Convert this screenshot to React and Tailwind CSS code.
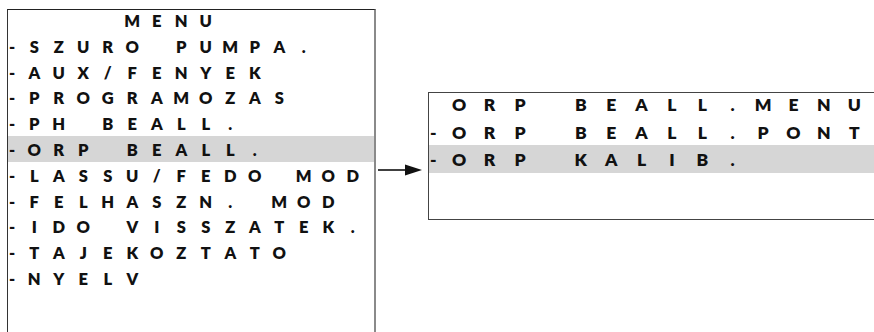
const mainRows = [
  { text: 'SZURO PUMPA.', dash: true },
  { text: 'AUX/FENYEK', dash: true },
  { text: 'PROGRAMOZAS', dash: true },
  { text: 'PH BEALL.', dash: true },
  { text: 'ORP BEALL.', dash: true, active: true },
  { text: 'LASSU/FEDO MOD', dash: true },
  { text: 'FELHASZN. MOD', dash: true },
  { text: 'IDO VISSZATEK.', dash: true },
  { text: 'TAJEKOZTATO', dash: true },
  { text: 'NYELV', dash: true },
];

const orpRows = [
  { text: 'ORP BEALL.PONT', dash: true },
  { text: 'ORP KALIB.', dash: true, active: true },
];

// one character per LCD cell
function Cells({ text, cell }) {
  return (
    <div className="flex">
      {text.split('').map((ch, i) => (
        <span key={i} className={`${cell} text-center`}>
          {ch === ' ' ? '\u00a0' : ch}
        </span>
      ))}
    </div>
  );
}

function MainMenu() {
  return (
    <div className="ml-[7px] mt-[9px] h-[340px] w-[369px] shrink-0 border-l border-t border-l-[#333] border-t-[#222] border-r-2 border-r-[#8a8a8a] text-[16.5px] font-extrabold text-[#111]">
      <div className="flex h-[22.8px] pl-px leading-[22.8px]">
        <span className="w-[13px]" />
        <Cells text="    MENU" cell="w-[24.5px]" />
      </div>
      {mainRows.map((row) => (
        <div
          key={row.text}
          className={`flex h-[25.8px] pl-px pt-[3px] leading-[22.8px] ${row.active ? 'bg-[#d6d6d6]' : ''}`}
        >
          <span className="w-[13px]">-</span>
          <Cells text={row.text} cell="w-[24.5px]" />
        </div>
      ))}
    </div>
  );
}

function OrpMenu() {
  return (
    <div className="mt-[92px] h-[128px] w-[470px] shrink-0 border-y border-l border-[#444] text-[17.5px] font-extrabold text-[#111]">
      <div className="flex h-[24.5px] pl-px leading-[24px]">
        <span className="w-[14px]" />
        <Cells text="ORP BEALL.MENU" cell="w-[30.4px]" />
      </div>
      {orpRows.map((row) => (
        <div
          key={row.text}
          className={`flex h-[27.5px] pl-px pt-[3px] leading-[24px] ${row.active ? 'bg-[#d6d6d6]' : ''}`}
        >
          <span className="w-[14px]">-</span>
          <Cells text={row.text} cell="w-[30.4px]" />
        </div>
      ))}
    </div>
  );
}

export default function App() {
  return (
    <div
      className="flex h-[332px] w-[874px] overflow-hidden bg-white"
      style={{ fontFamily: 'Lato, "Open Sans", sans-serif' }}
    >
      <MainMenu />
      <svg className="mt-[163px] shrink-0" width="52" height="14" viewBox="0 0 52 14">
        <line x1="2" y1="7" x2="32" y2="7" stroke="#111" strokeWidth="1.6" />
        <polygon points="29,1.5 46,7 29,12.5" fill="#111" />
      </svg>
      <OrpMenu />
    </div>
  );
}
